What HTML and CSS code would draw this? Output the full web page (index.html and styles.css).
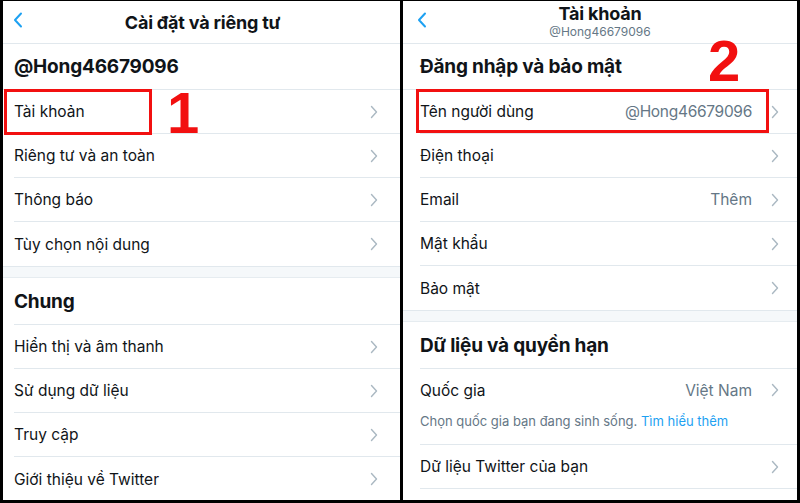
FILE: index.html
```html
<!DOCTYPE html>
<html lang="vi">
<head>
    <meta charset="UTF-8">
    <meta name="viewport" content="width=device-width, initial-scale=1.0">
    <title>Cài đặt và riêng tư</title>
    <link rel="stylesheet" href="styles.css">
</head>
<body>
    <div class="frame">
        <!-- Left screen: settings -->
        <div class="screen screen-left">
            <div class="topbar">
                <svg class="back" width="10" height="16" viewBox="0 0 10 16"><path d="M8 1.5 L2 8 L8 14.5" fill="none" stroke="#1da1f2" stroke-width="2" stroke-linecap="round" stroke-linejoin="round"/></svg>
                <div class="title">Cài đặt và riêng tư</div>
            </div>

            <div class="heading">@Hong46679096</div>
            <div class="row">
                <span class="label">Tài khoản</span>
                <svg class="chev" width="8" height="14" viewBox="0 0 8 14"><path d="M1.5 1.5 L6.5 7 L1.5 12.5" fill="none" stroke="#aab8c2" stroke-width="1.4" stroke-linecap="round" stroke-linejoin="round"/></svg>
                <div class="mark mark-one"></div>
                <div class="step step-one">1</div>
            </div>
            <div class="row">
                <span class="label">Riêng tư và an toàn</span>
                <svg class="chev" width="8" height="14" viewBox="0 0 8 14"><path d="M1.5 1.5 L6.5 7 L1.5 12.5" fill="none" stroke="#aab8c2" stroke-width="1.4" stroke-linecap="round" stroke-linejoin="round"/></svg>
            </div>
            <div class="row">
                <span class="label">Thông báo</span>
                <svg class="chev" width="8" height="14" viewBox="0 0 8 14"><path d="M1.5 1.5 L6.5 7 L1.5 12.5" fill="none" stroke="#aab8c2" stroke-width="1.4" stroke-linecap="round" stroke-linejoin="round"/></svg>
            </div>
            <div class="row last">
                <span class="label">Tùy chọn nội dung</span>
                <svg class="chev" width="8" height="14" viewBox="0 0 8 14"><path d="M1.5 1.5 L6.5 7 L1.5 12.5" fill="none" stroke="#aab8c2" stroke-width="1.4" stroke-linecap="round" stroke-linejoin="round"/></svg>
            </div>

            <div class="spacer"></div>

            <div class="heading heading-section">Chung</div>
            <div class="row">
                <span class="label">Hiển thị và âm thanh</span>
                <svg class="chev" width="8" height="14" viewBox="0 0 8 14"><path d="M1.5 1.5 L6.5 7 L1.5 12.5" fill="none" stroke="#aab8c2" stroke-width="1.4" stroke-linecap="round" stroke-linejoin="round"/></svg>
            </div>
            <div class="row">
                <span class="label">Sử dụng dữ liệu</span>
                <svg class="chev" width="8" height="14" viewBox="0 0 8 14"><path d="M1.5 1.5 L6.5 7 L1.5 12.5" fill="none" stroke="#aab8c2" stroke-width="1.4" stroke-linecap="round" stroke-linejoin="round"/></svg>
            </div>
            <div class="row">
                <span class="label">Truy cập</span>
                <svg class="chev" width="8" height="14" viewBox="0 0 8 14"><path d="M1.5 1.5 L6.5 7 L1.5 12.5" fill="none" stroke="#aab8c2" stroke-width="1.4" stroke-linecap="round" stroke-linejoin="round"/></svg>
            </div>
            <div class="row last">
                <span class="label">Giới thiệu về Twitter</span>
                <svg class="chev" width="8" height="14" viewBox="0 0 8 14"><path d="M1.5 1.5 L6.5 7 L1.5 12.5" fill="none" stroke="#aab8c2" stroke-width="1.4" stroke-linecap="round" stroke-linejoin="round"/></svg>
            </div>
        </div>

        <!-- Right screen: account -->
        <div class="screen screen-right">
            <div class="topbar">
                <svg class="back" width="10" height="16" viewBox="0 0 10 16"><path d="M8 1.5 L2 8 L8 14.5" fill="none" stroke="#1da1f2" stroke-width="2" stroke-linecap="round" stroke-linejoin="round"/></svg>
                <div class="title-stack">
                    <div class="title">Tài khoản</div>
                    <div class="subtitle">@Hong46679096</div>
                </div>
            </div>

            <div class="heading">Đăng nhập và bảo mật
                <div class="step step-two">2</div>
            </div>
            <div class="row">
                <span class="label">Tên người dùng</span>
                <span class="value value-user">@Hong46679096</span>
                <svg class="chev" width="8" height="14" viewBox="0 0 8 14"><path d="M1.5 1.5 L6.5 7 L1.5 12.5" fill="none" stroke="#aab8c2" stroke-width="1.4" stroke-linecap="round" stroke-linejoin="round"/></svg>
                <div class="mark mark-two"></div>
            </div>
            <div class="row">
                <span class="label">Điện thoại</span>
                <svg class="chev" width="8" height="14" viewBox="0 0 8 14"><path d="M1.5 1.5 L6.5 7 L1.5 12.5" fill="none" stroke="#aab8c2" stroke-width="1.4" stroke-linecap="round" stroke-linejoin="round"/></svg>
            </div>
            <div class="row">
                <span class="label">Email</span>
                <span class="value">Thêm</span>
                <svg class="chev" width="8" height="14" viewBox="0 0 8 14"><path d="M1.5 1.5 L6.5 7 L1.5 12.5" fill="none" stroke="#aab8c2" stroke-width="1.4" stroke-linecap="round" stroke-linejoin="round"/></svg>
            </div>
            <div class="row">
                <span class="label">Mật khẩu</span>
                <svg class="chev" width="8" height="14" viewBox="0 0 8 14"><path d="M1.5 1.5 L6.5 7 L1.5 12.5" fill="none" stroke="#aab8c2" stroke-width="1.4" stroke-linecap="round" stroke-linejoin="round"/></svg>
            </div>
            <div class="row last">
                <span class="label">Bảo mật</span>
                <svg class="chev" width="8" height="14" viewBox="0 0 8 14"><path d="M1.5 1.5 L6.5 7 L1.5 12.5" fill="none" stroke="#aab8c2" stroke-width="1.4" stroke-linecap="round" stroke-linejoin="round"/></svg>
            </div>

            <div class="spacer"></div>

            <div class="heading heading-section">Dữ liệu và quyền hạn</div>
            <div class="row row-top last">
                <span class="label">Quốc gia</span>
                <span class="value">Việt Nam</span>
                <svg class="chev" width="8" height="14" viewBox="0 0 8 14"><path d="M1.5 1.5 L6.5 7 L1.5 12.5" fill="none" stroke="#aab8c2" stroke-width="1.4" stroke-linecap="round" stroke-linejoin="round"/></svg>
            </div>
            <div class="note">Chọn quốc gia bạn đang sinh sống. <span class="link">Tìm hiểu thêm</span></div>
            <div class="row">
                <span class="label">Dữ liệu Twitter của bạn</span>
                <svg class="chev" width="8" height="14" viewBox="0 0 8 14"><path d="M1.5 1.5 L6.5 7 L1.5 12.5" fill="none" stroke="#aab8c2" stroke-width="1.4" stroke-linecap="round" stroke-linejoin="round"/></svg>
            </div>
        </div>
    </div>
</body>
</html>
```

FILE: styles.css
```css
html, body {
    margin: 0;
    padding: 0;
}
body {
    background: #000;
    font-family: Inter, "Noto Sans", sans-serif;
    color: #101418;
}
.frame {
    display: flex;
    gap: 3px;
    width: 800px;
    height: 503px;
    padding: 1px 3px 3px 3px;
    box-sizing: border-box;
}
.screen {
    background: #fff;
    overflow: hidden;
    display: flex;
    flex-direction: column;
}
.screen-left {
    width: 397px;
}
.screen-right {
    width: 394px;
}
.topbar {
    position: relative;
    height: 42px;
    border-bottom: 1px solid #e1e8ed;
    display: flex;
    align-items: center;
    justify-content: center;
    flex-shrink: 0;
}
.back {
    position: absolute;
    left: 10px;
    top: 11px;
}
.screen-right .back {
    left: 14px;
}
.title {
    font-size: 18px;
    font-weight: 700;
    letter-spacing: -0.2px;
}
.screen-left .title {
    margin-left: 2px;
}
.title-stack {
    text-align: center;
    margin-top: -2px;
}
.title-stack .title {
    line-height: 21px;
}
.subtitle {
    font-size: 12px;
    color: #657786;
    line-height: 16px;
}
.heading {
    position: relative;
    height: 45px;
    border-bottom: 1px solid #e1e8ed;
    display: flex;
    align-items: center;
    padding-left: 11px;
    font-size: 19px;
    font-weight: 700;
    letter-spacing: -0.2px;
    flex-shrink: 0;
}
.screen-right .heading {
    padding-left: 17px;
}
.heading-section {
    height: 47px;
    border-bottom: none;
    background: linear-gradient(#e1e8ed, #e1e8ed) no-repeat 11px 100% / 100% 1px;
}
.screen-right .heading-section {
    background-position: 17px 100%;
}
.row {
    position: relative;
    height: 44px;
    box-sizing: border-box;
    display: flex;
    align-items: center;
    margin-left: 11px;
    padding-right: 22px;
    border-bottom: 1px solid #e1e8ed;
    font-size: 15.5px;
    flex-shrink: 0;
}
.screen-right .row {
    margin-left: 17px;
    padding-right: 18px;
}
.row.last {
    border-bottom: none;
}
.label {
    flex: 1;
}
.value {
    color: #657786;
    margin-right: 19px;
}
.value-user {
    letter-spacing: -0.3px;
}
.chev {
    flex-shrink: 0;
}
.row-top {
    height: 40px;
    padding-top: 2px;
}
.note {
    margin-left: 17px;
    height: 36px;
    box-sizing: border-box;
    padding-top: 3px;
    border-bottom: 1px solid #e1e8ed;
    font-size: 13px;
    line-height: 18px;
    color: #657786;
    flex-shrink: 0;
}
.link {
    color: #1da1f2;
}
.spacer {
    height: 12px;
    background: #f5f8fa;
    border-top: 1px solid #e1e8ed;
    border-bottom: 1px solid #e6ecf0;
    box-sizing: border-box;
    flex-shrink: 0;
}
.mark {
    position: absolute;
    border: 3px solid #f21010;
    box-sizing: border-box;
}
.mark-one {
    left: -10px;
    top: -1px;
    width: 148px;
    height: 46px;
}
.mark-two {
    left: -4px;
    top: -1px;
    width: 353px;
    height: 44px;
}
.step {
    position: absolute;
    font-family: "Liberation Sans", Arial, sans-serif;
    font-weight: 700;
    font-size: 58px;
    line-height: 58px;
    color: #f21010;
}
.step-one {
    left: 153px;
    top: -6px;
}
.step-two {
    left: 305px;
    top: -12px;
}
```
